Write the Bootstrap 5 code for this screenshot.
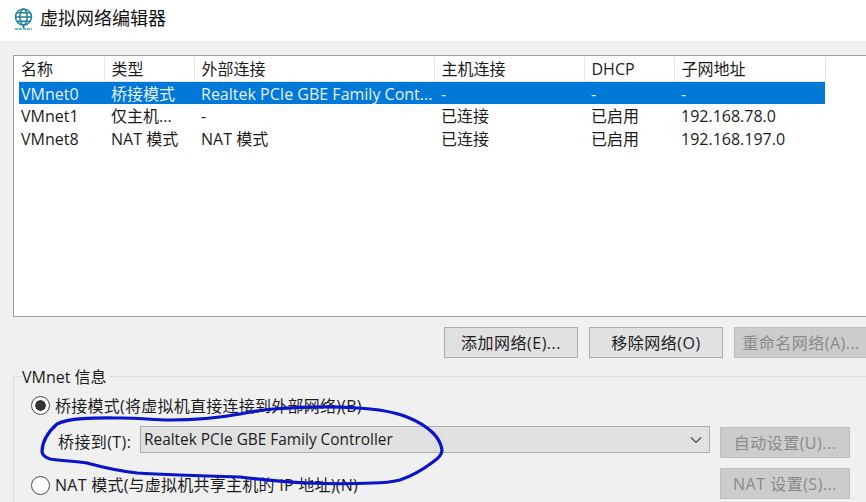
<!DOCTYPE html>
<html lang="zh">
<head>
<meta charset="utf-8">
<title>虚拟网络编辑器</title>
<link href="https://cdn.jsdelivr.net/npm/bootstrap@5.3.0/dist/css/bootstrap.min.css" rel="stylesheet">
<style>
html,body{margin:0;height:502px;overflow:hidden}
body{width:866px;background:#f0f0f0;color:#1c1c1c;font:16px/1.2 "Open Sans","Noto Sans CJK SC",sans-serif;position:relative}
.titlebar{height:41px;background:#fff;padding:0 0 4px 14px;gap:7px;font-size:18px;color:#111}
.listbox{height:262px;margin:14px 0 0 13px;background:#fff;border:1px solid #a0a0a0;border-right:0;padding:1px 0 0 5px}
.nettable{width:806px;table-layout:fixed;border-collapse:collapse;margin:0;color:#1c1c1c}
.nettable th{font-weight:400;height:24px;padding:2px 0 0 7px;border-right:1px solid #e5e5e5;background:#fff;vertical-align:middle}
.nettable td{height:23px;padding:3px 0 0 7px;vertical-align:middle;white-space:nowrap;border:0;background:#fff;color:#1c1c1c}
.nettable th:first-child,.nettable td:first-child{padding-left:2px}
.nettable tr.picked td{background:#0078d7;color:#e6f1fb}
.actions{margin:10px 0 0 444px;gap:11px}
.winbtn{height:31px;width:134px;background:#e1e1e1;border:1px solid #adadad;border-radius:0;padding:0;font-size:16px;letter-spacing:.5px;color:#1c1c1c;white-space:nowrap;flex:none}
.winbtn:disabled{background:#ccc;border-color:#bfbfbf;color:#8a8a8a;opacity:1}
.smallbtn{width:130px}
.infogroup{margin:18px 0 0 13px;border-top:1px solid #dcdcdc;border-left:1px solid #dcdcdc;height:131px;position:relative}
.grouplabel{position:absolute;left:8px;top:-9px;background:#f0f0f0;padding-right:3px;line-height:18px}
.optrow{margin:0;padding:0;min-height:0;gap:5px;height:20px}
.optrow .form-check-input{float:none;margin:0;width:19px;height:19px;flex:none;background-color:#fff;border:1px solid #4a4a4a;box-shadow:none}
.optrow .form-check-input:checked{background-color:#fff;border-color:#4a4a4a;background-image:radial-gradient(circle,#333 0 5px,transparent 5.5px)}
.optrow .form-check-label{opacity:1;letter-spacing:.25px;margin-top:4px}
.firstopt{padding:18px 0 0 17px}
.bridgerow{margin:12px 0 0 44px;height:32px}
.bridgerow label{width:82px;flex:none;padding-top:6px;letter-spacing:.4px;white-space:nowrap}
.netselect{width:570px;height:27px;flex:none;background-color:#e1e1e1;border:1px solid #adadad;border-radius:0;padding:2px 0 0 3px;font-size:15.400px;color:#1c1c1c;line-height:1.2;background-image:url("data:image/svg+xml,%3csvg xmlns='http://www.w3.org/2000/svg' viewBox='0 0 12 8'%3e%3cpath fill='none' stroke='%23444' stroke-width='1.1' d='M1 1.500l5 5 5-5'/%3e%3c/svg%3e");background-position:right 7px center;background-size:12px 8px;margin-top:-1px}
.sidebtn{margin-left:10px}
.lastrow{padding:9px 0 0 17px}
.lastrow .optrow{margin-top:7px}
.lastrow .form-check-label{margin-top:2px}
.lastrow .sidebtn{margin-left:auto;margin-right:16px}
.inkmark{position:absolute;left:0;top:0;pointer-events:none}
</style>
</head>
<body>
<div class="titlebar d-flex align-items-center">
<svg width="19" height="22" viewBox="0 0 19 22" aria-hidden="true"><g fill="none" stroke="#1f7f9c" stroke-width="1.500"><circle cx="9.500" cy="9" r="8"/><ellipse cx="9.500" cy="9" rx="3.600" ry="8"/><path d="M1.500 9h16M3 4.800h13M3 13.200h13"/></g><path d="M9.500 17v3" stroke="#1f7f9c" stroke-width="2"/><path d="M1 21h17" stroke="#1bb5a5" stroke-width="1.600" stroke-dasharray="3 1"/></svg>
<span>虚拟网络编辑器</span>
</div>
<div class="listbox">
<table class="table nettable">
<colgroup><col style="width:85px"><col style="width:90px"><col style="width:240px"><col style="width:150px"><col style="width:90px"><col style="width:151px"></colgroup>
<thead><tr><th>名称</th><th>类型</th><th>外部连接</th><th>主机连接</th><th>DHCP</th><th>子网地址</th></tr></thead>
<tbody>
<tr class="picked"><td>VMnet0</td><td>桥接模式</td><td>Realtek PCIe GBE Family Cont...</td><td>-</td><td>-</td><td>-</td></tr>
<tr><td>VMnet1</td><td>仅主机...</td><td>-</td><td>已连接</td><td>已启用</td><td>192.168.78.0</td></tr>
<tr><td>VMnet8</td><td>NAT 模式</td><td>NAT 模式</td><td>已连接</td><td>已启用</td><td>192.168.197.0</td></tr>
</tbody>
</table>
</div>
<div class="actions d-flex">
<button type="button" class="btn winbtn">添加网络(E)...</button>
<button type="button" class="btn winbtn">移除网络(O)</button>
<button type="button" class="btn winbtn" disabled>重命名网络(A)...</button>
</div>
<div class="infogroup">
<span class="grouplabel">VMnet 信息</span>
<div class="firstopt">
<div class="form-check optrow d-flex align-items-center">
<input class="form-check-input" type="radio" name="mode" id="m1" checked>
<label class="form-check-label" for="m1">桥接模式(将虚拟机直接连接到外部网络)(B)</label>
</div>
</div>
<div class="bridgerow d-flex align-items-start">
<label for="adapter">桥接到(T):</label>
<select class="form-select netselect" id="adapter"><option>Realtek PCIe GBE Family Controller</option></select>
<button type="button" class="btn winbtn smallbtn sidebtn" disabled>自动设置(U)...</button>
</div>
<div class="lastrow d-flex align-items-start">
<div class="form-check optrow d-flex align-items-center">
<input class="form-check-input" type="radio" name="mode" id="m2">
<label class="form-check-label" for="m2">NAT 模式(与虚拟机共享主机的 IP 地址)(N)</label>
</div>
<button type="button" class="btn winbtn smallbtn sidebtn" disabled>NAT 设置(S)...</button>
</div>
</div>
<svg class="inkmark" width="866" height="502" viewBox="0 0 866 502" aria-hidden="true"><path d="M122 418C100 418 70 417 57 424C48 432 42 442 42 452C43 457 47 458 50 459C62 461 75 461 87 463C105 468 120 471 137 473C170 475 205 476 240 477C265 480 285 482 307 483C330 484 352 484 373 483C383 483 392 482 400 480C415 475 425 468 433 462C438 458 442 455 442 450C441 443 438 438 433 433C425 425 417 421 407 417C392 411 375 409 357 408C330 406 300 407 273 409C262 410 250 412 240 414C218 418 195 420 170 420C155 420 138 418 122 418Z" fill="none" stroke="#0a14c8" stroke-width="3.200" stroke-linecap="round" stroke-linejoin="round"/></svg>
<script src="https://cdn.jsdelivr.net/npm/bootstrap@5.3.0/dist/js/bootstrap.bundle.min.js"></script>
</body>
</html>
